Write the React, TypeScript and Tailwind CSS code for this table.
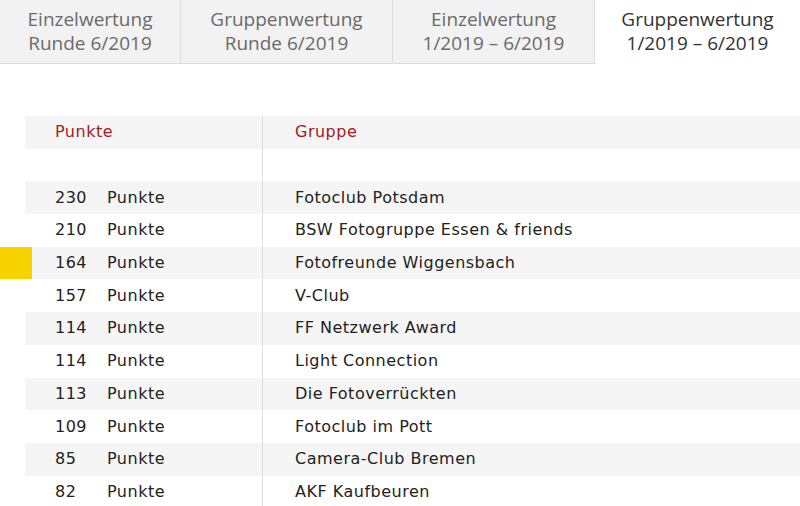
import React from 'react';

const tabs = [
  { top: 'Einzelwertung', bottom: 'Runde 6/2019', w: 'w-[181px]', active: false },
  { top: 'Gruppenwertung', bottom: 'Runde 6/2019', w: 'w-[212px]', active: false },
  { top: 'Einzelwertung', bottom: '1/2019 – 6/2019', w: 'w-[202px]', active: false },
  { top: 'Gruppenwertung', bottom: '1/2019 – 6/2019', w: 'flex-1', active: true },
];

const rows = [
  { points: 230, group: 'Fotoclub Potsdam' },
  { points: 210, group: 'BSW Fotogruppe Essen & friends' },
  { points: 164, group: 'Fotofreunde Wiggensbach', mine: true },
  { points: 157, group: 'V-Club' },
  { points: 114, group: 'FF Netzwerk Award' },
  { points: 114, group: 'Light Connection' },
  { points: 113, group: 'Die Fotoverrückten' },
  { points: 109, group: 'Fotoclub im Pott' },
  { points: 85, group: 'Camera-Club Bremen' },
  { points: 82, group: 'AKF Kaufbeuren' },
];

const App = () => {
  return (
    <div className="h-[506px] w-[800px] overflow-hidden bg-white">
      {/* tabs */}
      <nav className="flex h-[64px] font-['Open_Sans',sans-serif] text-[19px] leading-[24px]">
        {tabs.map((t, i) => (
          <div
            key={i}
            className={
              t.w +
              ' flex flex-col items-center justify-center pb-[2px] ' +
              (t.active
                ? 'bg-white text-[#333]'
                : 'border-b border-r border-[#dcdcdc] bg-[#f2f2f2] text-[#6a6a6a]')
            }
          >
            <span>{t.top}</span>
            <span>{t.bottom}</span>
          </div>
        ))}
      </nav>

      {/* ranking table */}
      <div className="mt-[52px] ml-[25px] font-['DejaVu_Sans',sans-serif] text-[16px] tracking-[0.5px] text-[#222]">
        <div className="flex h-[32.7px] items-center bg-[#f5f5f5] text-[#a3201d]">
          <div className="flex w-[238px] items-center self-stretch border-r border-[#dedede] pl-[30px]">Punkte</div>
          <div className="pl-[32px]">Gruppe</div>
        </div>
        <div className="flex h-[32.7px]">
          <div className="w-[238px] border-r border-[#dedede]" />
        </div>
        {rows.map((r, i) => (
          <div
            key={i}
            className={'relative flex h-[32.7px] items-center ' + (i % 2 === 0 ? 'bg-[#f5f5f5]' : 'bg-white')}
          >
            {r.mine && <span className="absolute left-[-25px] top-0 h-full w-[32px] bg-[#f6d300]" />}
            <div className="flex w-[238px] items-center self-stretch border-r border-[#dedede] pl-[30px]">
              <span className="w-[52px]">{r.points}</span>
              <span>Punkte</span>
            </div>
            <div className="pl-[32px]">{r.group}</div>
          </div>
        ))}
      </div>
    </div>
  );
};

export default App;
